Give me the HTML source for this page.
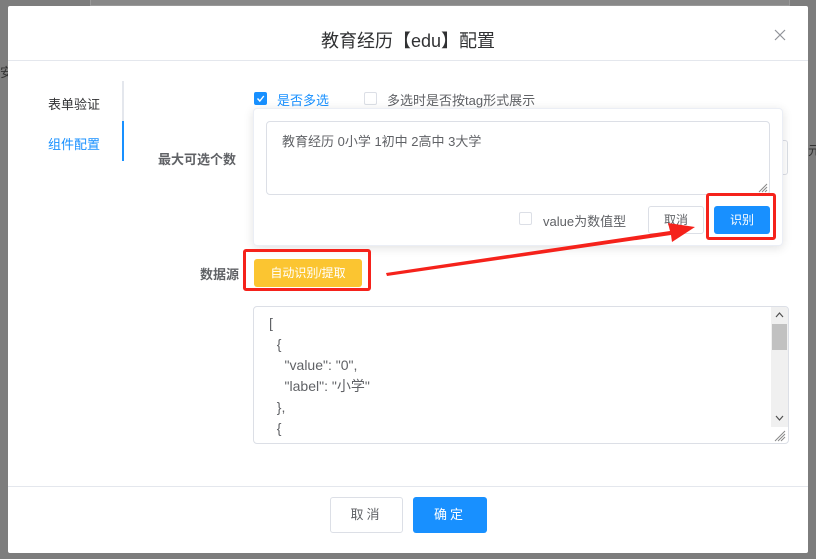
<!DOCTYPE html>
<html><head><meta charset="utf-8"><style>
*{box-sizing:border-box;margin:0;padding:0}
body{width:816px;height:559px;overflow:hidden;background:#7d7d7d;font-family:"Liberation Sans","Noto Sans CJK SC",sans-serif;position:relative;color:#606266}
.a{position:absolute}
.dlg{left:8px;top:6px;width:800px;height:547px;background:#fff;border-radius:2px}
.t{font-size:13px;white-space:nowrap}
.btn{position:absolute;border-radius:3px;font-size:12px;text-align:center}
</style></head><body>
<div class="a" style="left:90px;top:0;width:700px;height:6px;border:1px solid #999;border-top:none;background:#888"></div>
<div class="a t" style="left:0;top:62px;color:#333">安</div>
<div class="a t" style="left:808px;top:140px;color:#333">元</div>
<div class="a dlg"></div>
<div class="a" style="left:8px;top:60px;width:800px;height:1px;background:#e4e7ed"></div>
<div class="a" style="left:0;top:27px;width:816px;text-align:center;font-size:18px;color:#303133">教育经历【edu】配置</div>
<svg class="a" style="left:774px;top:29px" width="12" height="12"><path d="M1 1L11 11M11 1L1 11" stroke="#909399" stroke-width="1.2"/></svg>
<div class="a t" style="left:48px;top:94px;color:#303133">表单验证</div>
<div class="a t" style="left:48px;top:134px;color:#1890ff">组件配置</div>
<div class="a" style="left:122px;top:81px;width:2px;height:80px;background:#e4e7ed"></div>
<div class="a" style="left:122px;top:121px;width:2px;height:40px;background:#1890ff"></div>
<div class="a" style="left:254px;top:92px;width:13px;height:13px;background:#1890ff;border-radius:2px"></div>
<svg class="a" style="left:254px;top:92px" width="13" height="13"><path d="M3.5 6.5L5.8 9L9.8 4" stroke="#fff" stroke-width="1.4" fill="none"/></svg>
<div class="a t" style="left:277px;top:90px;color:#1890ff">是否多选</div>
<div class="a" style="left:364px;top:92px;width:13px;height:13px;border:1px solid #dcdfe6;border-radius:2px"></div>
<div class="a t" style="left:387px;top:90px">多选时是否按tag形式展示</div>
<div class="a t" style="left:158px;top:149px;font-weight:bold">最大可选个数</div>
<div class="a" style="left:760px;top:140px;width:28px;height:35px;border:1px solid #dcdfe6;border-radius:3px"></div>
<div class="a" style="left:253px;top:108px;width:530px;height:138px;background:#fff;border:1px solid #ebeef5;border-radius:4px;box-shadow:0 2px 10px rgba(0,0,0,.12)"></div>
<div class="a" style="left:266px;top:121px;width:504px;height:74px;border:1px solid #dcdfe6;border-radius:4px"></div>
<div class="a t" style="left:282px;top:131px">教育经历 0小学 1初中 2高中 3大学</div>
<svg class="a" style="left:756px;top:181px" width="12" height="12"><path d="M11 3L3 11M11 6L6 11M11 9L9 11" stroke="#888" stroke-width="1"/></svg>
<div class="a" style="left:519px;top:212px;width:13px;height:13px;border:1px solid #dcdfe6;border-radius:2px"></div>
<div class="a t" style="left:543px;top:211px">value为数值型</div>
<div class="btn" style="left:648px;top:206px;width:56px;height:28px;border:1px solid #dcdfe6;line-height:26px;color:#606266">取消</div>
<div class="btn" style="left:714px;top:206px;width:56px;height:28px;background:#1890ff;line-height:28px;color:#fff">识别</div>
<div class="a" style="left:706px;top:193px;width:70px;height:47px;border:3px solid #f5221b;border-radius:3px"></div>
<div class="a t" style="left:200px;top:264px;font-weight:bold">数据源</div>
<div class="btn" style="left:254px;top:259px;width:108px;height:28px;background:#fbc531;line-height:28px;color:#fff">自动识别/提取</div>
<div class="a" style="left:243px;top:249px;width:128px;height:42px;border:3px solid #f5221b;border-radius:3px"></div>
<svg class="a" style="left:0;top:0" width="816" height="559"><path d="M386 273L670 231L668 223L695 227L672 242L671 235L387 276Z" fill="#f5221b"/></svg>
<div class="a" style="left:253px;top:306px;width:536px;height:138px;border:1px solid #dcdfe6;border-radius:4px;overflow:hidden">
<div style="position:absolute;left:15px;top:6px;font-size:14px;line-height:21px;color:#606266;white-space:pre">[
  {
    "value": "0",
    "label": "小学"
  },
  {</div>
<div style="position:absolute;right:0;top:0;width:17px;height:120px;background:#f0f0f0"></div>
<div style="position:absolute;right:1px;top:17px;width:15px;height:26px;background:#c1c1c1"></div>
<svg style="position:absolute;right:4px;top:4px" width="9" height="112"><path d="M1 6L4.5 2L8 6M1 105L4.5 109L8 105" stroke="#505050" stroke-width="1.2" fill="none"/></svg>
</div>
<svg class="a" style="left:772px;top:428px" width="14" height="14"><path d="M13 3L3 13M13 6L6 13M13 9L9 13" stroke="#888" stroke-width="1"/></svg>
<div class="a" style="left:8px;top:486px;width:800px;height:1px;background:#e4e7ed"></div>
<div class="btn" style="left:330px;top:497px;width:73px;height:36px;border:1px solid #dcdfe6;line-height:34px;font-size:13px;letter-spacing:3px;color:#606266">取消</div>
<div class="btn" style="left:413px;top:497px;width:74px;height:36px;background:#1890ff;line-height:36px;font-size:13px;letter-spacing:3px;color:#fff">确定</div>
</body></html>
